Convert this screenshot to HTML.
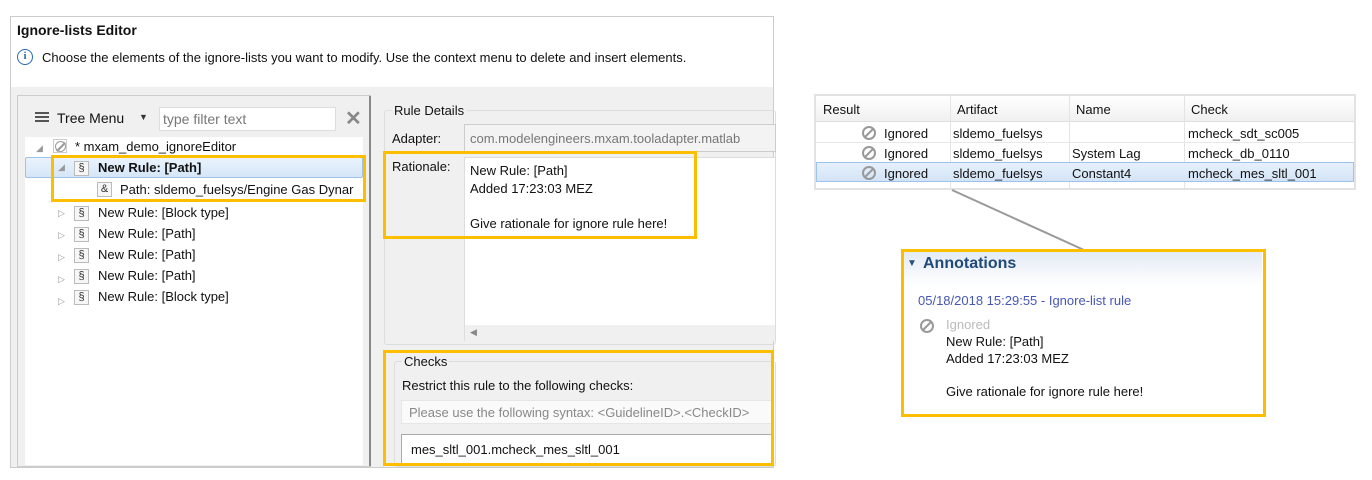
<!DOCTYPE html>
<html><head><meta charset="utf-8"><style>
*{box-sizing:border-box;margin:0;padding:0}
body{width:1372px;height:480px;background:#fff;position:relative;font-family:"Liberation Sans",sans-serif;font-size:13px;color:#111;overflow:hidden}
.a{position:absolute;white-space:nowrap}
.y{position:absolute;border:3px solid #fbbf00}
.sec{display:inline-block;width:15px;height:15px;border:1px solid #bbb;background:#f6f6f6;font-size:11px;text-align:center;line-height:13px;color:#333;vertical-align:middle}
.ig{display:inline-block;width:14px;height:14px;border:2px solid #999;border-radius:50%;position:relative;vertical-align:middle}
.ig:after{content:"";position:absolute;left:4px;top:-1px;width:2px;height:12px;background:#999;transform:rotate(45deg)}
.tri{color:#999;font-size:9px;vertical-align:middle}
</style></head><body>
<div class="a" style="left:10px;top:16px;width:764px;height:452px;border:1px solid #ccc;background:#f0f0f0"></div>
<div class="a" style="left:11px;top:17px;width:762px;height:70px;background:#fff"></div>
<div class="a" style="left:17px;top:22px;font-weight:bold;font-size:14px">Ignore-lists Editor</div>
<div class="a" style="left:17px;top:49px;width:16px;height:16px;border:1.5px solid #2a6ab0;border-radius:50%;color:#2a6ab0;font-size:11px;font-weight:bold;text-align:center;line-height:13px;font-family:'Liberation Serif',serif">i</div>
<div class="a" style="left:42px;top:50px">Choose the elements of the ignore-lists you want to modify. Use the context menu to delete and insert elements.</div>
<div class="a" style="left:17px;top:95px;width:354px;height:372px;border:1px solid #ccc;background:#f0f0f0"></div>
<div class="a" style="left:25px;top:137px;width:338px;height:328px;background:#fff"></div>
<div class="a" style="left:369px;top:96px;width:2px;height:370px;background:#888"></div>
<div class="a" style="left:35px;top:112px;width:14px;height:2px;background:#555;box-shadow:0 4px #555,0 8px #555"></div>
<div class="a" style="left:57px;top:110px;font-size:14px">Tree Menu</div>
<div class="a" style="left:139px;top:112px;font-size:9px;color:#333">▼</div>
<div class="a" style="left:159px;top:107px;width:177px;height:24px;border:1px solid #ddd;background:#fff;color:#777;font-size:14px;padding:3px 3px">type filter text</div>
<div class="a" style="left:345px;top:106px;font-size:20px;color:#888;font-weight:bold">✕</div>
<div class="a" style="left:36px;top:140px"><span class="tri">◢</span></div>
<div class="a" style="left:53px;top:139px;width:14px;height:14px;border:1px solid #ccc"><span class="ig" style="width:11px;height:11px;border-width:1px;left:1px;top:1px;vertical-align:top"></span></div>
<div class="a" style="left:75px;top:139px">* mxam_demo_ignoreEditor</div>
<div class="a" style="left:25px;top:157px;width:338px;height:21px;background:linear-gradient(#eaf3fd,#d5e6f8);border:1px solid #9ec3ea;border-radius:2px"></div>
<div class="a" style="left:58px;top:159px"><span class="tri">◢</span></div>
<div class="a" style="left:74px;top:160px"><span class="sec">§</span></div>
<div class="a" style="left:98px;top:160px;font-weight:bold">New Rule: [Path]</div>
<div class="a" style="left:97px;top:181px"><span class="sec">&amp;</span></div>
<div class="a" style="left:120px;top:182px">Path: sldemo_fuelsys/Engine Gas Dynar</div>
<div class="a" style="left:58px;top:202px;line-height:21px"><span class="tri">▷</span><br><span class="tri">▷</span><br><span class="tri">▷</span><br><span class="tri">▷</span><br><span class="tri">▷</span></div>
<div class="a" style="left:74px;top:202px;line-height:21px"><span class="sec">§</span><br><span class="sec">§</span><br><span class="sec">§</span><br><span class="sec">§</span><br><span class="sec">§</span></div>
<div class="a" style="left:98px;top:202px;line-height:21px">New Rule: [Block type]<br>New Rule: [Path]<br>New Rule: [Path]<br>New Rule: [Path]<br>New Rule: [Block type]</div>
<div class="y" style="left:51px;top:155px;width:315px;height:47px"></div>
<div class="a" style="left:384px;top:110px;width:392px;height:235px;border:1px solid #ddd;border-radius:3px"></div>
<div class="a" style="left:392px;top:103px;background:#f0f0f0;padding:0 2px">Rule Details</div>
<div class="a" style="left:392px;top:131px">Adapter:</div>
<div class="a" style="left:464px;top:124px;width:312px;height:28px;border:1px solid #ccc;background:#f3f3f3;color:#777;padding:6px 5px">com.modelengineers.mxam.tooladapter.matlab</div>
<div class="a" style="left:392px;top:159px">Rationale:</div>
<div class="a" style="left:464px;top:157px;width:312px;height:184px;border:1px solid #ddd;background:#fff"></div>
<div class="a" style="left:465px;top:325px;width:310px;height:16px;background:#f0f0f0;color:#888;font-size:9px;padding:2px 5px">◀</div>
<div class="a" style="left:470px;top:162px;line-height:17.5px">New Rule: [Path]<br>Added 17:23:03 MEZ<br><br>Give rationale for ignore rule here!</div>
<div class="y" style="left:383px;top:151px;width:314px;height:88px"></div>
<div class="a" style="left:394px;top:361px;width:382px;height:106px;border:1px solid #ddd;border-radius:3px"></div>
<div class="a" style="left:402px;top:354px;background:#f0f0f0;padding:0 2px">Checks</div>
<div class="a" style="left:402px;top:378px">Restrict this rule to the following checks:</div>
<div class="a" style="left:401px;top:400px;width:372px;height:24px;background:#fafafa;border:1px solid #e6e6e6;color:#888;padding:4px 7px">Please use the following syntax: &lt;GuidelineID&gt;.&lt;CheckID&gt;</div>
<div class="a" style="left:401px;top:434px;width:372px;height:30px;background:#fff;border:1px solid #aaa;padding:7px 9px">mes_sltl_001.mcheck_mes_sltl_001</div>
<div class="y" style="left:383px;top:350px;width:391px;height:116px"></div>
<div class="a" style="left:814px;top:94px;width:542px;height:96px;border:2px solid #e2e2e2;background:#fff"></div>
<div class="a" style="left:816px;top:96px;width:538px;height:26px;background:linear-gradient(#fff,#f0f0f0);border-bottom:1px solid #e0e0e0"></div>
<div class="a" style="left:950px;top:96px;width:1px;height:92px;background:#e4e4e4;box-shadow:119px 0 #e4e4e4,234px 0 #e4e4e4"></div>
<div class="a" style="left:823px;top:102px">Result</div>
<div class="a" style="left:957px;top:102px">Artifact</div>
<div class="a" style="left:1076px;top:102px">Name</div>
<div class="a" style="left:1191px;top:102px">Check</div>
<div class="a" style="left:816px;top:142px;width:538px;height:1px;background:#e8e8e8"></div>
<div class="a" style="left:816px;top:162px;width:538px;height:20px;background:linear-gradient(#e6f0fb,#d4e4f7);border:1px solid #9ec3ea"></div>
<div class="a" style="left:862px;top:122px;line-height:20px"><span class="ig"></span><br><span class="ig"></span><br><span class="ig"></span></div>
<div class="a" style="left:884px;top:124px;line-height:20px">Ignored<br>Ignored<br>Ignored</div>
<div class="a" style="left:953px;top:124px;line-height:20px">sldemo_fuelsys<br>sldemo_fuelsys<br>sldemo_fuelsys</div>
<div class="a" style="left:1072px;top:144px;line-height:20px">System Lag<br>Constant4</div>
<div class="a" style="left:1188px;top:124px;line-height:20px">mcheck_sdt_sc005<br>mcheck_db_0110<br>mcheck_mes_sltl_001</div>
<svg class="a" style="left:0;top:0" width="1372" height="480"><line x1="952" y1="190" x2="1084" y2="250" stroke="#999" stroke-width="2"/></svg>
<div class="a" style="left:904px;top:252px;width:358px;height:161px;background:#fff"></div>
<div class="a" style="left:904px;top:252px;width:358px;height:34px;background:linear-gradient(#e4ebf5,#fff)"></div>
<div class="a" style="left:907px;top:258px;font-size:10px;color:#2a4f80">▼</div>
<div class="a" style="left:923px;top:255px;font-size:16px;font-weight:bold;color:#1f4a7a">Annotations</div>
<div class="a" style="left:918px;top:293px;color:#4656b5">05/18/2018 15:29:55 - Ignore-list rule</div>
<div class="a" style="left:920px;top:317px"><span class="ig"></span></div>
<div class="a" style="left:946px;top:317px;color:#bbb">Ignored</div>
<div class="a" style="left:946px;top:334px;line-height:16.5px">New Rule: [Path]<br>Added 17:23:03 MEZ<br><br>Give rationale for ignore rule here!</div>
<div class="y" style="left:901px;top:249px;width:365px;height:168px"></div>
</body></html>
